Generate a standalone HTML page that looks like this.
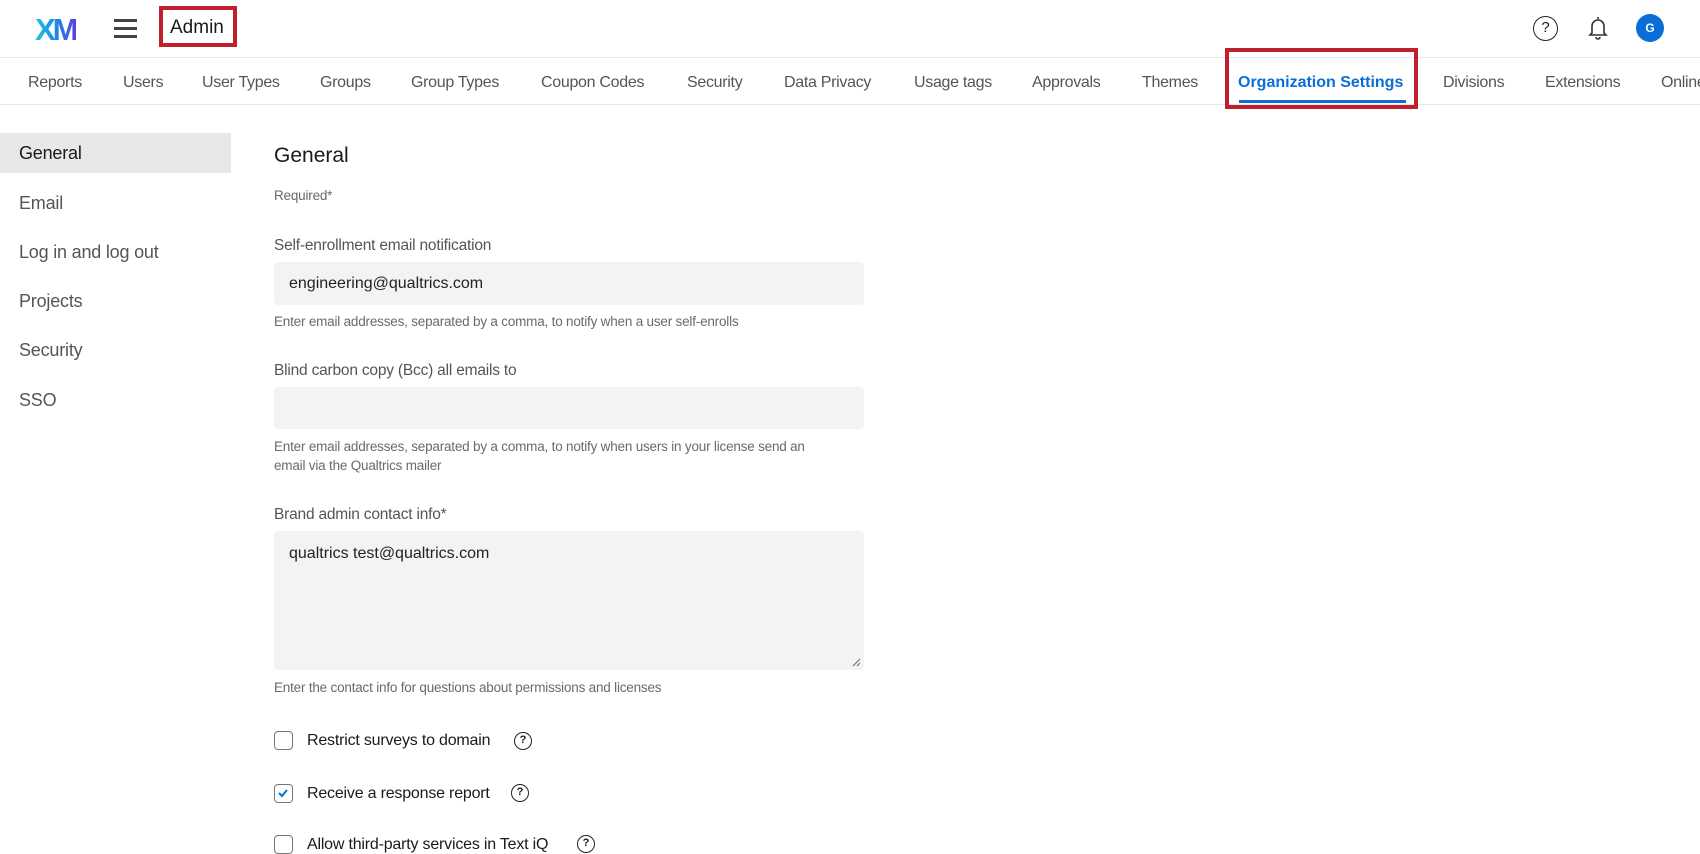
<!DOCTYPE html>
<html><head><meta charset="utf-8"><style>
*{box-sizing:border-box;margin:0;padding:0}
body{width:1700px;height:850px;overflow:hidden;background:#fff;font-family:"Liberation Sans",sans-serif;color:#1a1a1a;position:relative}
.a{position:absolute;white-space:nowrap}
.tab{position:absolute;top:74px;font-size:16px;color:#555;letter-spacing:-0.3px}
.side{position:absolute;left:19px;font-size:18px;color:#555;letter-spacing:-0.2px}
.lbl{position:absolute;left:274px;font-size:15.5px;color:#555;letter-spacing:-0.2px}
.help{position:absolute;left:274px;font-size:13.5px;color:#6a6a6a;letter-spacing:-0.2px;line-height:19px}
.inp{position:absolute;left:274px;width:590px;background:#f3f3f3;border-radius:4px}
.cb{position:absolute;left:274px;width:19px;height:19px;border:1.5px solid #777;border-radius:4px;background:#fff}
.cbl{position:absolute;left:307px;font-size:16px;color:#1a1a1a;letter-spacing:-0.2px}
.q{position:absolute;width:18px;height:18px;border:1.5px solid #222;border-radius:50%;font-size:11px;text-align:center;line-height:15px;font-weight:bold}
</style></head><body>
<div class="a" style="left:35px;top:12px;font-size:31px;font-weight:bold;letter-spacing:-3px;background:linear-gradient(90deg,#21c6d9,#1b8ce6 50%,#5b3fe0);-webkit-background-clip:text;color:transparent">XM</div>
<div class="a" style="left:114px;top:19px;width:23px;height:2.5px;background:#444;box-shadow:0 8px 0 #444,0 16px 0 #444"></div>
<div class="a" style="left:159px;top:6px;width:78px;height:41px;border:4px solid #c0202e"></div>
<div class="a" style="left:170px;top:17px;font-size:19px;color:#1a1a1a">Admin</div>
<div class="q" style="left:1533px;top:16px;width:25px;height:25px;line-height:22px;font-size:15px;font-weight:normal;border-width:1.6px">?</div>
<svg class="a" style="left:1587px;top:15px" width="22" height="26" viewBox="0 0 22 26"><path d="M11 2v2M5 18V11a6 6 0 0 1 12 0v7l2 2H3z M9 22a2 2 0 0 0 4 0" fill="none" stroke="#333" stroke-width="1.6"/></svg>
<div class="a" style="left:1636px;top:14px;width:28px;height:28px;border-radius:50%;background:#0b6ed6;color:#fff;font-size:12px;font-weight:bold;text-align:center;line-height:28px">G</div>
<div class="a" style="left:0;top:57px;width:1700px;height:1px;background:#e6e6e6"></div>
<div class="a" style="left:0;top:104px;width:1700px;height:1px;background:#e6e6e6"></div>
<div class="tab" style="left:28px">Reports</div>
<div class="tab" style="left:123px">Users</div>
<div class="tab" style="left:202px">User Types</div>
<div class="tab" style="left:320px">Groups</div>
<div class="tab" style="left:411px">Group Types</div>
<div class="tab" style="left:541px">Coupon Codes</div>
<div class="tab" style="left:687px">Security</div>
<div class="tab" style="left:784px">Data Privacy</div>
<div class="tab" style="left:914px">Usage tags</div>
<div class="tab" style="left:1032px">Approvals</div>
<div class="tab" style="left:1142px">Themes</div>
<div class="tab" style="left:1238px;color:#0b6ed6;font-weight:bold;letter-spacing:0">Organization Settings</div>
<div class="a" style="left:1239px;top:100px;width:167px;height:3px;background:#0b6ed6"></div>
<div class="a" style="left:1225px;top:48px;width:193px;height:61px;border:4px solid #c0202e"></div>
<div class="tab" style="left:1443px">Divisions</div>
<div class="tab" style="left:1545px">Extensions</div>
<div class="tab" style="left:1661px">Online</div>
<div class="a" style="left:0;top:133px;width:231px;height:40px;background:#e8e8e8"></div>
<div class="side" style="top:143px;color:#1a1a1a">General</div>
<div class="side" style="top:193px">Email</div>
<div class="side" style="top:242px">Log in and log out</div>
<div class="side" style="top:291px">Projects</div>
<div class="side" style="top:340px">Security</div>
<div class="side" style="top:390px">SSO</div>
<div class="a" style="left:274px;top:144px;font-size:21px;color:#1a1a1a">General</div>
<div class="help" style="top:186px">Required*</div>
<div class="lbl" style="top:237px">Self-enrollment email notification</div>
<div class="inp" style="top:262px;height:43px"><span class="a" style="left:15px;top:13px;font-size:16px;color:#222">engineering@qualtrics.com</span></div>
<div class="help" style="top:312px">Enter email addresses, separated by a comma, to notify when a user self-enrolls</div>
<div class="lbl" style="top:362px">Blind carbon copy (Bcc) all emails to</div>
<div class="inp" style="top:387px;height:42px"></div>
<div class="help" style="top:437px">Enter email addresses, separated by a comma, to notify when users in your license send an<br>email via the Qualtrics mailer</div>
<div class="lbl" style="top:506px">Brand admin contact info*</div>
<div class="inp" style="top:531px;height:139px"><span class="a" style="left:15px;top:14px;font-size:16px;color:#222">qualtrics test@qualtrics.com</span>
<svg class="a" style="right:3px;bottom:3px" width="9" height="9"><path d="M1 8L8 1M5 8L8 5" stroke="#666" stroke-width="1"/></svg></div>
<div class="help" style="top:678px">Enter the contact info for questions about permissions and licenses</div>
<div class="cb" style="top:731px"></div>
<div class="cbl" style="top:732px">Restrict surveys to domain</div>
<div class="q" style="left:514px;top:732px">?</div>
<div class="cb" style="top:784px"><svg width="16" height="16" style="position:absolute;left:0;top:0"><path d="M4 8l3 3 5-6" fill="none" stroke="#0b6ed6" stroke-width="2"/></svg></div>
<div class="cbl" style="top:785px">Receive a response report</div>
<div class="q" style="left:511px;top:784px">?</div>
<div class="cb" style="top:835px"></div>
<div class="cbl" style="top:836px">Allow third-party services in Text iQ</div>
<div class="q" style="left:577px;top:835px">?</div>
</body></html>
